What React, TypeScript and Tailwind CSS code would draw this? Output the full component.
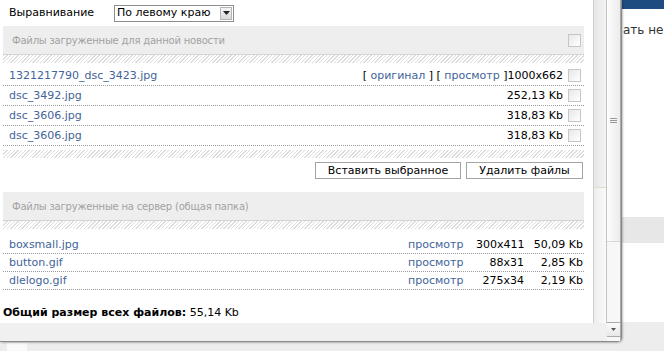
const ownFiles = [
  { name: "1321217790_dsc_3423.jpg", info: "1000x662", links: true },
  { name: "dsc_3492.jpg", info: "252,13 Kb", links: false },
  { name: "dsc_3606.jpg", info: "318,83 Kb", links: false },
  { name: "dsc_3606.jpg", info: "318,83 Kb", links: false },
];

const serverFiles = [
  { name: "boxsmall.jpg", dims: "300x411", size: "50,09 Kb" },
  { name: "button.gif", dims: "88x31", size: "2,85 Kb" },
  { name: "dlelogo.gif", dims: "275x34", size: "2,19 Kb" },
];

function Check() {
  return (
    <span className="block h-[13px] w-[13px] shrink-0 border border-[#c6c6c6] bg-gradient-to-br from-[#e8e8e8] to-white" />
  );
}

function Stripes({ className }: { className: string }) {
  return (
    <div
      className={`h-[8px] bg-[repeating-linear-gradient(135deg,#dddddd_0px,#dddddd_1px,#ffffff_1px,#ffffff_2.6px)] ${className}`}
    />
  );
}

function SectionHead({ title, check }: { title: string; check: boolean }) {
  return (
    <div className="flex h-[29px] items-center justify-between border-b border-[#d4d4d4] bg-[#eeeeee] pl-[9px] pr-[3px] text-[10px] tracking-[-0.2px] text-[#a2a2a2]">
      <span>{title}</span>
      {check && <Check />}
    </div>
  );
}

export default function App() {
  return (
    <div className="relative h-[351px] w-[664px] overflow-hidden bg-white font-['DejaVu_Sans',Verdana,sans-serif] text-[11px] text-black">
      {/* page behind the dialog */}
      <div className="h-[9px] bg-[#1c4c80]" />
      <div className="h-[208px] whitespace-nowrap pl-[623px] pt-[14px] text-[12px] leading-[15px] text-[#333]">
        ать не
      </div>
      <div className="h-[26px] bg-[#e7e7e7]" />
      <div className="h-[79px] bg-white" />
      <div className="h-[29px] bg-[#ededed] pt-[21px] pl-[7px]">
        <div className="h-[8px] w-[20px] bg-[#fafafa]" />
      </div>

      {/* dialog window */}
      <div className="absolute left-0 top-0 flex h-[342px] w-[622px] rounded-br-[5px] border-b border-r border-[#8a8a8a] bg-[#f0f0f0] shadow-[1px_1px_2px_rgba(0,0,0,0.25)]">
        <div className="flex flex-col">
          <div className="flex h-[323px]">
            <div className="w-[594px] border-r border-[#cfcfcf] bg-white pl-[3px] pr-[9px]">
              <div className="flex h-[26px] items-center">
                <span className="w-[111px] pl-[6px]">Выравнивание</span>
                <div className="flex h-[17px] w-[120px] items-center justify-between border border-[#8e8e8e] bg-white pl-[2px] pr-[1px]">
                  <span>По левому краю</span>
                  <span className="flex h-[13px] w-[12px] items-center justify-center border border-[#b5b5b5] bg-gradient-to-b from-[#f6f6f6] to-[#d9d9d9]">
                    <svg width="7" height="4" viewBox="0 0 7 4">
                      <path d="M0 0h7L3.5 4z" fill="#222" />
                    </svg>
                  </span>
                </div>
              </div>

              <SectionHead title="Файлы загруженные для данной новости" check />
              <Stripes className="" />

              <div className="mt-[3px]">
                {ownFiles.map((f, i) => (
                  <div
                    key={i}
                    className="flex h-[20px] items-center justify-between border-b border-dotted border-[#9a9a9a] pl-[6px] pr-[3px] pt-[2px]"
                  >
                    <span className="text-[#42649a]">{f.name}</span>
                    <div className="flex items-center">
                      {f.links && (
                        <span className="whitespace-pre">
                          {"[ "}
                          <span className="text-[#42649a]">оригинал</span>
                          {" ] [ "}
                          <span className="text-[#42649a]">просмотр</span>
                          {" ]"}
                        </span>
                      )}
                      <span>{f.info}</span>
                      <span className="ml-[5px] -mt-[2px]">
                        <Check />
                      </span>
                    </div>
                  </div>
                ))}
              </div>

              <Stripes className="mt-[4px]" />

              <div className="mt-[4px] flex justify-end gap-[5px] pr-[1px]">
                <button className="h-[17px] w-[146px] border border-[#a3a3a3] bg-white text-[11px] leading-[15px]">
                  Вставить выбранное
                </button>
                <button className="h-[17px] w-[117px] border border-[#a3a3a3] bg-white text-[11px] leading-[15px]">
                  Удалить файлы
                </button>
              </div>

              <div className="mt-[13px]">
                <SectionHead title="Файлы загруженные на сервер (общая папка)" check={false} />
              </div>
              <Stripes className="" />

              <div className="mt-[7px]">
                {serverFiles.map((f, i) => (
                  <div
                    key={i}
                    className="flex h-[18px] items-center justify-between border-b border-dotted border-[#9a9a9a] pl-[6px] pr-[1px] pt-[1px]"
                  >
                    <span className="text-[#42649a]">{f.name}</span>
                    <div className="flex items-center">
                      <span className="w-[68px] text-[#42649a]">просмотр</span>
                      <span className="w-[48px] text-right">{f.dims}</span>
                      <span className="w-[59px] text-right">{f.size}</span>
                    </div>
                  </div>
                ))}
              </div>

              <div className="mt-[16px] leading-[14px]">
                <b>Общий размер всех файлов:</b> 55,14 Kb
              </div>
            </div>

            {/* inner scroll track */}
            <div className="flex w-[13px] flex-col border-r border-[#c4c4c4] bg-gradient-to-r from-[#ededed] to-[#fafafa]">
              <div className="h-[188px] border-b border-[#e0ddd0] bg-gradient-to-r from-[#e6e6e6] to-[#f4f4f4]" />
            </div>
          </div>
          <div className="h-[18px] bg-[#f0f0f0]" />
        </div>

        {/* outer scrollbar */}
        <div className="flex w-[14px] flex-col border-r border-[#a9a9a9] bg-[#f7f7f7]">
          <div className="flex h-[242px] items-center justify-center border-b border-[#d8d8d8] bg-gradient-to-r from-[#fdfdfd] to-[#ececec]">
            <svg width="7" height="6" viewBox="0 0 7 6">
              <path d="M0 0.5h7M0 2.5h7M0 4.5h7" stroke="#9a9a9a" strokeWidth="1" />
            </svg>
          </div>
          <div className="flex-1" />
          <div className="mb-[4px] flex h-[15px] items-center justify-center border-y border-[#a9a9a9] bg-gradient-to-b from-[#fbfbfb] to-[#e8e8e8]">
            <svg width="5" height="3" viewBox="0 0 5 3">
              <path d="M0 0h5L2.5 3z" fill="#555" />
            </svg>
          </div>
        </div>
      </div>
    </div>
  );
}
